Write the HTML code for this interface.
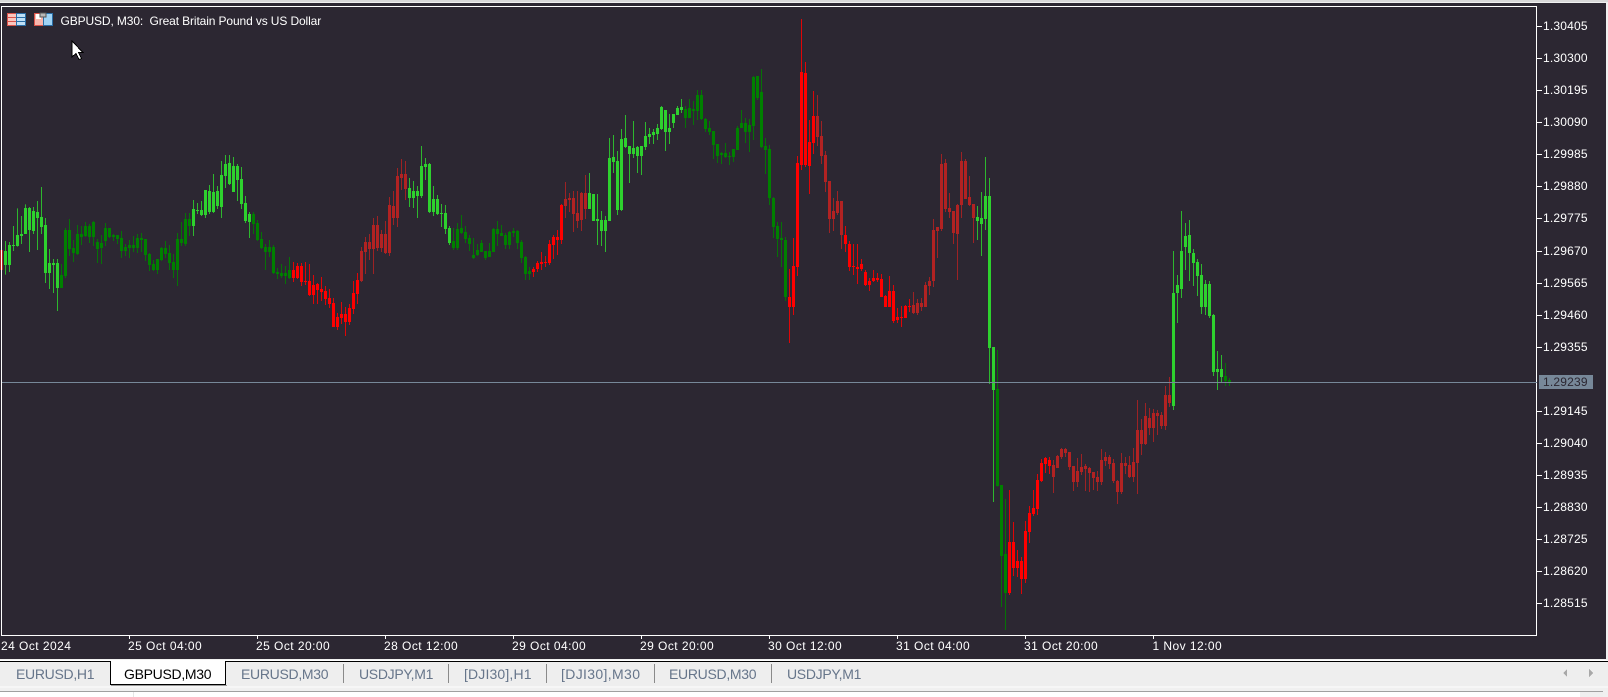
<!DOCTYPE html>
<html><head><meta charset="utf-8"><style>
html,body{margin:0;padding:0;width:1608px;height:697px;overflow:hidden;background:#f0f0f0;font-family:"Liberation Sans",sans-serif}
#chart{position:absolute;left:0;top:3px;width:1606px;height:656px;background:#2c2732}
svg{position:absolute;left:0;top:0}
.w{fill:none;stroke-width:.25;stroke-opacity:.85}
.b{fill:none;stroke-width:.75}
.L{stroke:#2ed12e}.D{stroke:#008000}.R{stroke:#ff0000}.F{stroke:#b22222}
.t{position:absolute;color:#fff;font-size:12px;line-height:14px;white-space:pre}
.p{left:1543px;letter-spacing:.2px}
.x{top:639px;letter-spacing:.45px}
.tab{position:absolute;top:665px;font-size:14px;line-height:18px;color:#66758a;letter-spacing:-.3px;white-space:pre}
.dj{letter-spacing:.15px}
.sep{position:absolute;top:664px;width:1px;height:19px;background:#8a8a8a}
</style></head><body>
<div style="position:absolute;left:0;top:0;width:1608px;height:2px;background:#d8d8d8"></div>
<div id="chart"></div>
<svg width="1608" height="697" shape-rendering="crispEdges">
<g transform="translate(5.5,140) scale(4,.3333333)">
<path class="b F" d="M-1 330V390"/>
<path class="w L" d="M0 303V404M1 306V396M2 258V333M3 205V320M4 228V312M5 193V282M6 201V336M7 201V282M8 183V330M9 141V282M10 234V429M11 327V447M12 357V459M13 357V513M47 180V288M48 189V222M49 183V228M50 150V234M51 135V222M52 102V219M53 138V207M54 63V234M55 45V144M56 45V135M57 51V156M58 72V183M59 81V207M60 168V249M61 216V294"/>
<path class="b L" d="M0 333V375M1 315V375M2 315V318M3 285V318M4 282V288M5 204V282M6 204V270M7 213V273M8 216V234M9 231V261M10 255V399M11 369V399M12 369V375M13 369V444M47 207V258M48 210V213M49 210V225M50 150V225M51 153V216M52 156V216M53 153V198M54 105V201M55 72V108M56 69V132M57 78V156M58 78V120M59 117V192M60 189V243M61 222V246"/>
<path class="w D" d="M14 372V444M15 264V414M16 237V348M17 300V366M18 255V345M19 258V315M20 246V291M21 252V309M22 243V318M23 297V369M24 285V372M25 249V318M26 264V294M27 282V303M28 285V312M29 273V354M30 312V348M31 300V354M32 288V336M33 282V339M34 279V336M35 297V363M36 339V393M37 360V393M38 357V402M39 321V363M40 303V354M41 315V390M42 342V414M43 279V438M44 246V318M45 219V318M46 219V288M62 216V282M63 240V303M64 276V327M65 312V390M66 300V351"/>
<path class="b D" d="M14 405V444M15 270V408M16 270V327M17 324V339M18 282V342M19 282V291M20 258V288M21 258V291M22 246V291M23 306V327M24 309V324M25 264V303M26 264V291M27 285V291M28 285V297M29 294V333M30 321V333M31 315V324M32 315V324M33 294V324M34 294V300M35 297V345M36 342V375M37 372V390M38 357V390M39 324V360M40 324V342M41 339V369M42 366V390M43 297V390M44 297V309M45 237V312M46 237V258M62 222V252M63 249V300M64 297V324M65 321V336M66 321V336"/>
</g>
<g transform="translate(5.5,130) scale(4,.3333333)">
<path class="w D" d="M67 345V432M68 414V447M69 402V444M70 408V462M71 381V447M112 294V360M113 279V360M114 255V312M115 288V339M116 315V363M117 324V387M118 342V378M119 330V366M120 363V390M121 339V381M122 294V366M123 273V348M124 285V318M125 309V357M126 303V357M127 294V321M128 300V357M129 330V399M130 378V450M131 411V450"/>
<path class="b D" d="M67 351V429M68 426V432M69 429V438M70 429V438M71 420V444M112 333V354M113 297V354M114 294V309M115 306V327M116 324V342M117 375V384M118 360V375M119 339V366M120 363V384M121 363V381M122 297V366M123 297V312M124 309V318M125 315V345M126 306V345M127 303V309M128 303V339M129 336V384M130 381V432M131 423V432"/>
<path class="w R" d="M72 396V456M73 399V447M74 399V468M75 396V465M76 402V498M77 435V522M78 459V522M79 441V513M80 468V525M81 477V534M82 504V591M83 549V600M84 516V582M85 531V618M86 522V585M87 453V552M88 429V522M132 411V441M133 393V426"/>
<path class="b R" d="M72 420V444M73 408V444M74 408V456M75 453V456M76 453V495M77 465V495M78 462V480M79 477V486M80 483V507M81 504V522M82 519V591M83 561V591M84 552V564M85 552V576M86 534V576M87 489V537M88 450V492M132 417V426M133 399V417"/>
<path class="w F" d="M89 351V456M90 321V432M91 312V390M92 264V432M93 258V363M94 300V366M95 273V372M96 201V378M97 183V285M98 114V291M99 87V180M100 93V210"/>
<path class="b F" d="M89 363V453M90 336V366M91 336V357M92 285V357M93 285V354M94 312V354M95 312V369M96 225V369M97 228V264M98 138V264M99 132V144M100 132V177"/>
<path class="w L" d="M101 144V231M102 153V234M103 168V264M104 48V204M105 84V150M106 99V249M107 168V258M108 195V255M109 222V291M110 225V312M111 288V345"/>
<path class="b L" d="M101 174V204M102 183V204M103 183V198M104 108V198M105 102V111M106 102V246M107 207V246M108 207V252M109 249V252M110 249V297M111 294V339"/>
</g>
<g transform="translate(5.5,70) scale(4,.3333333)">
<path class="w R" d="M134 546V600M135 558V591M136 510V585M137 495V567M138 480V555M139 402V522"/>
<path class="b R" d="M134 576V582M135 576V579M136 522V579M137 501V525M138 501V510M139 405V510"/>
<path class="w F" d="M140 336V444M141 369V426M142 363V486M143 363V474M144 366V483M145 315V447"/>
<path class="b F" d="M140 387V408M141 384V390M142 384V432M143 429V453M144 369V450M145 369V417"/>
<path class="w L" d="M146 309V417M147 372V453M148 372V525M149 423V528M150 438V546M151 204V453M152 195V309M153 243V435M154 177V423M155 135V234M156 228V339M157 153V264M158 228V309M159 228V315M160 156V240M161 174V222M162 177V222M163 162V210M164 108V180M165 120V243M166 132V222M167 132V174M168 108V135M169 87V129"/>
<path class="b L" d="M146 369V417M147 372V453M148 447V453M149 450V483M150 450V483M151 264V453M152 261V276M153 273V420M154 207V420M155 204V231M156 228V252M157 234V252M158 231V258M159 228V258M160 198V231M161 192V201M162 186V195M163 174V192M164 111V177M165 120V186M166 174V186M167 132V159M168 114V135M169 111V120"/>
<path class="w D" d="M170 108V174M171 87V144M172 93V165M173 60V150M174 60V150M175 144V186M176 153V195M177 183V267M178 222V279M179 246V282M180 219V264M181 246V285M182 237V276M183 168V240M184 120V174M185 144V219M186 147V246M187 18V210M188 18V90"/>
<path class="b D" d="M170 117V144M171 114V144M172 117V123M173 75V123M174 75V147M175 147V177M176 174V186M177 183V225M178 222V258M179 249V255M180 249V261M181 258V261M182 237V261M183 174V240M184 159V174M185 159V186M186 165V186M187 21V168M188 18V84"/>
</g>
<g transform="translate(5.5,10) scale(4,.3333333)">
<path class="w D" d="M189 177V414M190 384V492M191 405V585M192 561V684M193 636V741M194 636V771M195 681V873"/>
<path class="b D" d="M189 246V411M190 408V420M191 417V564M192 564V651M193 648V687M194 684V690M195 690V861"/>
<path class="w R" d="M196 777V999M197 684V915M198 438V798M199 27V480M200 156V471M201 330V552M202 243V432M210 648V726M211 693V783M212 702V795M213 702V822M214 747V783M215 780V828M216 804V843M217 780V816M218 789V816M219 792V861M220 855V891M221 798V891M222 825V939M223 894V939M224 888V951M225 885V924M226 867V906"/>
<path class="b R" d="M196 861V891M197 768V891M198 459V771M199 186V465M200 189V465M201 396V468M202 318V399M210 675V702M211 702V771M212 768V771M213 771V777M214 762V777M215 786V825M216 813V825M217 804V813M218 804V810M219 807V861M220 858V891M221 843V891M222 843V933M223 921V930M224 921V924M225 888V924M226 888V891"/>
<path class="w F" d="M203 255V408M204 333V462M205 423V546M206 513V669M207 564V663M208 543V615M209 573V717M227 846V912M228 867V915M229 864V903M230 816V891M231 801V855M232 627V831M233 651V744M234 432V663M235 447V606M236 549V624M237 603V702M238 582V810M239 426V624M240 447V567M241 498V588M242 582V699"/>
<path class="b F" d="M203 318V381M204 378V438M205 435V516M206 513V627M207 603V627M208 573V609M209 573V675M227 885V909M228 879V909M229 879V891M230 825V891M231 813V828M232 660V813M233 651V663M234 462V657M235 459V597M236 594V606M237 603V669M238 585V672M239 453V585M240 453V567M241 561V585M242 582V624"/>
</g>
<g transform="translate(5.5,140) scale(4,.3333333)">
<path class="w L" d="M243 198V300M244 156V348M245 51V270M246 114V732"/>
<path class="b L" d="M243 231V243M244 234V252M245 168V237M246 168V624"/>
</g>
<g transform="translate(5.5,300) scale(4,.3333333)">
<path class="w L" d="M247 141V606"/>
<path class="b L" d="M247 141V270"/>
<path class="w D" d="M248 150V560M249 555V921M250 597V990"/>
<path class="b D" d="M248 267V558M249 555V768M250 762V879"/>
<path class="w R" d="M251 570V885M252 666V828M253 750V831M254 771V882M255 663V849M256 618V729M257 570V648M258 522V645M259 477V546M260 471V519M261 471V522"/>
<path class="b R" d="M251 726V879M252 726V804M253 783V804M254 783V837M255 693V837M256 639V696M257 624V642M258 540V627M259 489V543M260 474V492M261 480V498"/>
<path class="w F" d="M262 480V579M263 465V504M264 444V477M265 444V471M266 456V510M267 498V573M268 474V561M269 462V525M270 492V573M271 501V576M272 516V570M273 513V573M274 447V555M275 456V498M276 465V507M277 477V549M278 540V612M279 459V582M280 471V522M281 468V534M282 444V546M283 300V582M284 357V465M285 309V435M286 324V405M287 327V426M288 330V405M289 336V387M290 258V390M291 231V321"/>
<path class="b F" d="M262 495V531M263 468V504M264 447V471M265 447V459M266 456V501M267 498V546M268 513V546M269 501V516M270 498V507M271 504V519M272 516V534M273 531V546M274 480V546M275 471V483M276 471V492M277 489V543M278 543V576M279 489V576M280 489V498M281 495V531M282 486V531M283 390V489M284 390V432M285 348V432M286 354V384M287 339V384M288 339V348M289 345V378M290 285V378M291 285V309"/>
</g>
<g transform="translate(5.5,190) scale(4,.3333333)">
<path class="w L" d="M292 183V660M293 255V399M294 63V324M295 99V240M296 90V273M297 177V288M298 207V318M299 222V372M300 270V375M301 273V384M302 372V558"/>
<path class="b L" d="M292 309V648M293 285V309M294 183V297M295 138V171M296 135V189M297 189V219M298 216V258M299 255V351M300 282V351M301 282V378M302 375V546"/>
</g>
<g transform="translate(5.5,340) scale(4,.3333333)">
<path class="w L" d="M303 33V150M304 45V126"/>
<path class="b L" d="M303 87V96M304 87V111"/>
<path class="w D" d="M305 69V138M306 114V138"/>
<path class="b D" d="M305 108V123M306 120V129"/>
</g>
<!-- frame -->
<rect x="1.5" y="6.5" width="1535" height="629" fill="none" stroke="#fff"/>
<path stroke="#fff" fill="none" d="M129.5 635V639M257.5 635V639M385.5 635V639M513.5 635V639M641.5 635V639M769.5 635V639M897.5 635V639M1025.5 635V639M1153.5 635V639"/>
<path stroke="#fff" fill="none" d="M1537 26.5H1542M1537 58.5H1542M1537 90.5H1542M1537 122.5H1542M1537 154.5H1542M1537 186.5H1542M1537 218.5H1542M1537 251.5H1542M1537 283.5H1542M1537 315.5H1542M1537 347.5H1542M1537 411.5H1542M1537 443.5H1542M1537 475.5H1542M1537 507.5H1542M1537 539.5H1542M1537 571.5H1542M1537 603.5H1542"/>
<rect x="2" y="382" width="1535" height="1" fill="#778899"/>
<rect x="1539" y="375" width="54" height="14" fill="#778899"/>
<!-- icons -->
<g>
<rect x="7.5" y="13.5" width="9" height="12" fill="#f9c7bf" stroke="#d9534a"/>
<path d="M8 17.5H16M8 21.5H16" stroke="#d9534a"/>
<rect x="16.5" y="13.5" width="9" height="12" fill="#bfe0f7" stroke="#2a6ea6"/>
<path d="M17 17.5H25M17 21.5H25" stroke="#2a6ea6"/>
<rect x="34.5" y="13.5" width="9" height="12" fill="#f7b7ae" stroke="#d9534a"/>
<rect x="36" y="14" width="5" height="5" fill="#fff"/>
<rect x="43.5" y="13.5" width="9" height="12" fill="#9fd3f5" stroke="#2a6ea6"/>
<rect x="40" y="13" width="6" height="4" fill="#b8b8b8" stroke="#555" stroke-width=".6"/>
</g>
<path d="M72 41V57L76 53.5L79 59.5L81.5 58.5L78.5 52.5H83Z" fill="#fff" stroke="#000"/>
<!-- tabs bg -->
<rect x="0" y="660" width="1608" height="1" fill="#fff"/>
<rect x="0" y="661" width="1608" height="1" fill="#000"/>
<rect x="0" y="662" width="1608" height="24" fill="#eeeeee"/>
<rect x="0" y="686" width="1608" height="2" fill="#f6f6f6"/>
<rect x="0" y="691" width="1603" height="1" fill="#a0a0a0"/>
<rect x="0" y="692" width="1603" height="5" fill="#fff"/>
<rect x="133" y="692" width="1" height="5" fill="#e6e6e6"/>
<rect x="1580" y="692" width="23" height="5" fill="#efefef"/>
<path d="M110.5 661V684.5H225.5V661" fill="#fff" stroke="#000"/>
<rect x="111" y="685" width="116" height="1" fill="#9a9a9a"/>
<path d="M1567 669V677L1563 673ZM1589 669V677L1593 673Z" fill="#a8a8a8"/>
</svg>
<div class="t" style="left:60.5px;top:13.5px;letter-spacing:-.12px">GBPUSD, M30:  Great Britain Pound vs US Dollar</div>
<div class="t p" style="top:19px">1.30405</div>
<div class="t p" style="top:51px">1.30300</div>
<div class="t p" style="top:83px">1.30195</div>
<div class="t p" style="top:115px">1.30090</div>
<div class="t p" style="top:147px">1.29985</div>
<div class="t p" style="top:179px">1.29880</div>
<div class="t p" style="top:211px">1.29775</div>
<div class="t p" style="top:244px">1.29670</div>
<div class="t p" style="top:276px">1.29565</div>
<div class="t p" style="top:308px">1.29460</div>
<div class="t p" style="top:340px">1.29355</div>
<div class="t p" style="top:375px;color:#2c2732">1.29239</div>
<div class="t p" style="top:404px">1.29145</div>
<div class="t p" style="top:436px">1.29040</div>
<div class="t p" style="top:468px">1.28935</div>
<div class="t p" style="top:500px">1.28830</div>
<div class="t p" style="top:532px">1.28725</div>
<div class="t p" style="top:564px">1.28620</div>
<div class="t p" style="top:596px">1.28515</div>
<div class="t x" style="left:1px">24 Oct 2024</div>
<div class="t x" style="left:128px">25 Oct 04:00</div>
<div class="t x" style="left:256px">25 Oct 20:00</div>
<div class="t x" style="left:384px">28 Oct 12:00</div>
<div class="t x" style="left:512px">29 Oct 04:00</div>
<div class="t x" style="left:640px">29 Oct 20:00</div>
<div class="t x" style="left:768px">30 Oct 12:00</div>
<div class="t x" style="left:896px">31 Oct 04:00</div>
<div class="t x" style="left:1024px">31 Oct 20:00</div>
<div class="t x" style="left:1152.5px">1 Nov 12:00</div>
<div class="tab" style="left:16px">EURUSD,H1</div>
<div class="tab" style="left:124px;color:#000">GBPUSD,M30</div>
<div class="tab" style="left:241px">EURUSD,M30</div>
<div class="sep" style="left:343px"></div>
<div class="tab" style="left:359px">USDJPY,M1</div>
<div class="sep" style="left:448px"></div>
<div class="tab dj" style="left:464px">[DJI30],H1</div>
<div class="sep" style="left:546px"></div>
<div class="tab dj" style="left:561px;letter-spacing:.35px">[DJI30],M30</div>
<div class="sep" style="left:654px"></div>
<div class="tab" style="left:669px">EURUSD,M30</div>
<div class="sep" style="left:771px"></div>
<div class="tab" style="left:787px">USDJPY,M1</div>
</body></html>
